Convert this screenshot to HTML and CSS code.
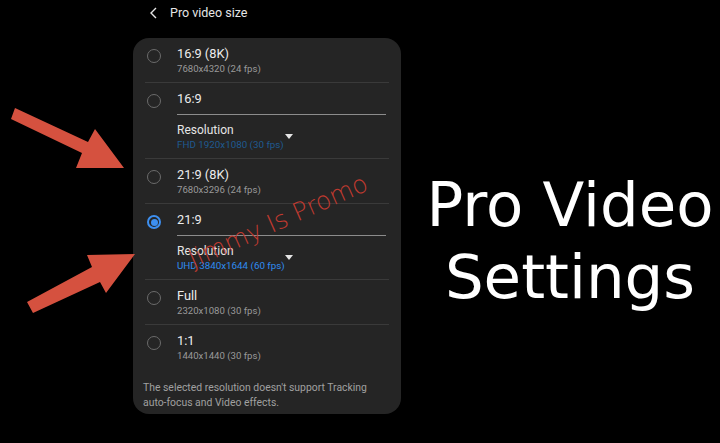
FILE: index.html
```html
<!DOCTYPE html>
<html lang="en">
<head>
  <meta charset="UTF-8">
  <title>Pro Video Settings</title>
  <link rel="stylesheet" href="styles.css">
</head>
<body>

  <div class="screen">
    <!-- Phone settings panel -->
    <div class="phone">
      <div class="topbar">
        <svg class="back" width="7" height="12" viewBox="0 0 7 12">
          <polyline points="6,1 1,6 6,11" fill="none" stroke="#e6e6e6" stroke-width="1.4"/>
        </svg>
        <span>Pro video size</span>
      </div>

      <div class="card">
        <div class="opt">
          <span class="radio"></span>
          <div class="opt-text">
            <div class="title">16:9 (8K)</div>
            <div class="sub">7680x4320 (24 fps)</div>
          </div>
        </div>

        <div class="opt">
          <span class="radio"></span>
          <div class="opt-text">
            <div class="title">16:9</div>
            <div class="line"></div>
            <div class="res">
              <div class="res-text">
                <div class="res-label">Resolution</div>
                <div class="res-value dim">FHD 1920x1080 (30 fps)</div>
              </div>
              <svg class="caret" width="8" height="6" viewBox="0 0 8 6"><polygon points="0,0 8,0 4,5" fill="#e6e6e6"/></svg>
            </div>
          </div>
        </div>

        <div class="opt">
          <span class="radio"></span>
          <div class="opt-text">
            <div class="title">21:9 (8K)</div>
            <div class="sub">7680x3296 (24 fps)</div>
          </div>
        </div>

        <div class="opt">
          <span class="radio on"></span>
          <div class="opt-text">
            <div class="title">21:9</div>
            <div class="line"></div>
            <div class="res">
              <div class="res-text">
                <div class="res-label">Resolution</div>
                <div class="res-value">UHD 3840x1644 (60 fps)</div>
              </div>
              <svg class="caret" width="8" height="6" viewBox="0 0 8 6"><polygon points="0,0 8,0 4,5" fill="#e6e6e6"/></svg>
            </div>
          </div>
        </div>

        <div class="opt">
          <span class="radio"></span>
          <div class="opt-text">
            <div class="title">Full</div>
            <div class="sub">2320x1080 (30 fps)</div>
          </div>
        </div>

        <div class="opt">
          <span class="radio"></span>
          <div class="opt-text">
            <div class="title">1:1</div>
            <div class="sub">1440x1440 (30 fps)</div>
          </div>
        </div>

        <p class="note">The selected resolution doesn't support Tracking auto-focus and Video effects.</p>
      </div>
    </div>

    <!-- Big caption -->
    <div class="caption">Pro Video<br>Settings</div>
  </div>

  <!-- Red pointer arrows -->
  <svg class="arrows" width="720" height="443" viewBox="0 0 720 443">
    <polygon points="15,108 88,142 95,129 124,168 76,168 82,153 11,119" fill="#d5513f"/>
    <polygon points="27,302 92,267 87,255 135,254 106,293 100,282 33,313" fill="#d5513f"/>
  </svg>

  <span class="watermark">Jimmy Is Promo</span>

</body>
</html>
```

FILE: styles.css
```css
body {
  margin: 0;
  background-color: #000;
  color: #e8e8e8;
  font-family: Roboto, "Liberation Sans", sans-serif;
  overflow: hidden;
}

.screen {
  display: flex;
  height: 443px;
}

.phone {
  margin-left: 133px;
  width: 268px;
}

.topbar {
  display: flex;
  align-items: center;
  gap: 13px;
  height: 25px;
  padding-left: 17px;
  margin-bottom: 13px;
  font-size: 12.5px;
  color: #e6e6e6;
}

.card {
  background-color: #252525;
  border-radius: 16px;
  padding: 0 12px 4px;
}

.opt {
  display: flex;
  align-items: flex-start;
  gap: 16px;
  padding: 8px 0 6px;
}

.opt + .opt {
  border-top: 1px solid #3a3a3a;
}

.radio {
  flex: 0 0 auto;
  box-sizing: border-box;
  width: 14px;
  height: 14px;
  margin: 3px 0 0 2px;
  border: 1.5px solid #6b6b6b;
  border-radius: 50%;
}

.radio.on {
  border: 2px solid #3d8ff0;
  position: relative;
}

.radio.on::after {
  content: "";
  position: absolute;
  left: 1.5px;
  top: 1.5px;
  width: 7px;
  height: 7px;
  border-radius: 50%;
  background-color: #3d8ff0;
}

.opt-text {
  flex: 1;
}

.title {
  font-size: 12.8px;
  line-height: 16px;
  color: #ececec;
}

.sub {
  font-size: 9.6px;
  line-height: 14px;
  color: #9a9a9a;
}

.line {
  height: 1px;
  margin: 7px 3px 8px 0;
  background-color: #8c8c8c;
}

.res {
  display: flex;
  align-items: center;
}

.res-text {
  width: 108px;
}

.res-label {
  font-size: 12px;
  line-height: 15px;
  color: #e6e6e6;
}

.res-value {
  font-size: 9.8px;
  line-height: 14px;
  color: #2f8cf0;
  white-space: nowrap;
}

.res-value.dim {
  color: #1f5a90;
}

.caret {
  margin-top: -2px;
}

.note {
  margin: 11px -2px 0;
  font-size: 10.4px;
  line-height: 15px;
  color: #a0a0a0;
}

.caption {
  flex: 1;
  display: flex;
  align-items: center;
  justify-content: center;
  padding: 38px 0 0 19px;
  font-family: "DejaVu Sans", Verdana, sans-serif;
  font-size: 61px;
  line-height: 72px;
  text-align: center;
  color: #fff;
}

.arrows {
  position: absolute;
  left: 0;
  top: 0;
  pointer-events: none;
}

.watermark {
  position: absolute;
  left: 278px;
  top: 221px;
  transform: translate(-50%, -50%) rotate(-24deg);
  font-family: "DejaVu Sans", sans-serif;
  font-weight: 200;
  font-size: 25px;
  color: #c03a30;
  white-space: nowrap;
}
```
